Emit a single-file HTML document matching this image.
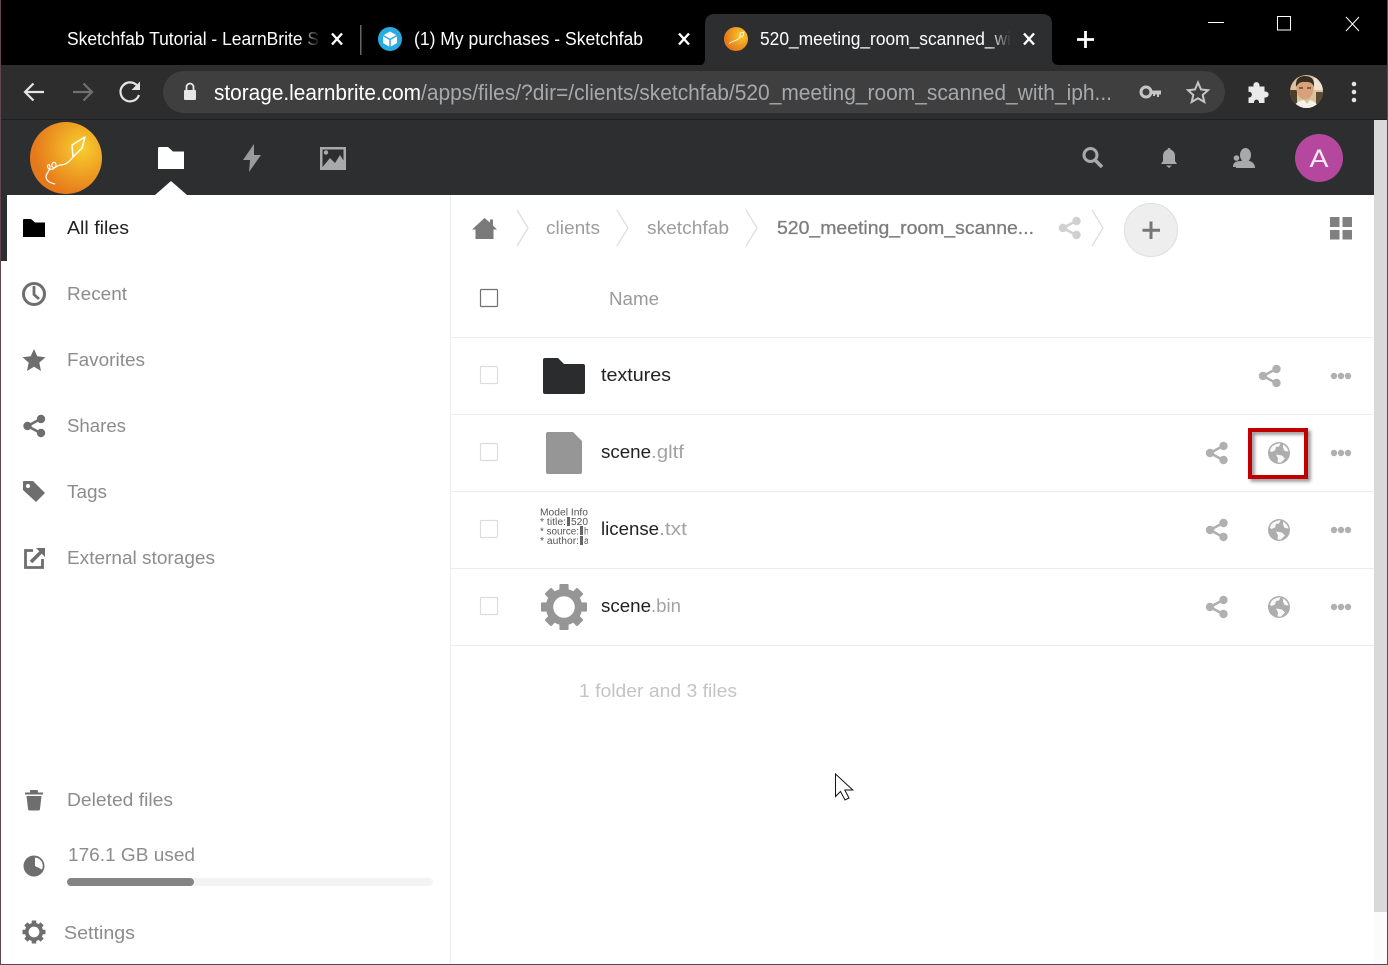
<!DOCTYPE html>
<html><head><meta charset="utf-8"><title>Files</title>
<style>
html,body{margin:0;padding:0;background:#fff;overflow:hidden;width:1388px;height:965px}
svg{display:block;position:absolute;left:0;top:0}
text{font-family:"Liberation Sans",sans-serif;white-space:pre}
.side{font-size:18px;fill:#8c8c8c}
.name{font-size:18px;fill:#222}
.ext{font-size:18px;fill:#a3a3a3}
.tab{font-size:18px;fill:#fff}
.url{font-size:22px}
</style></head><body>
<svg width="1388" height="965" viewBox="0 0 1388 965" xmlns="http://www.w3.org/2000/svg">
<defs>
<g id="share"><path d="M-7 0L6-7M-7 0L6 7" stroke-width="2.600" fill="none" stroke="currentColor"/><circle cx="-7" cy="0" r="4.200" fill="currentColor"/><circle cx="6.500" cy="-7" r="4.200" fill="currentColor"/><circle cx="6.500" cy="7" r="4.200" fill="currentColor"/></g>
<g id="dots" fill="#b0b0b0"><circle cx="-7" r="3.200"/><circle cx="0" r="3.200"/><circle cx="7" r="3.200"/></g>
<g id="globe"><circle r="11" fill="#adadad"/><path d="M-7-6.500C-4-9 0-10 1.500-9.500L0-6.500-3-6-4-2.500-7.500-1-9-2C-9-3.500-8-5-7-6.500Z" fill="#fff" opacity=".92"/><path d="M4-8.500C7-7 9-4 9.500-1.500L5.500-2 4-5.500Z" fill="#fff" opacity=".92"/><path d="M-3 1.500L3 2.500 6 5.500 2 9.500C0 9.800-1 9.500-1.500 9L-1 5.500Z" fill="#fff" opacity=".92"/></g>
<g id="gear"><circle r="14.500" fill="none" stroke="currentColor" stroke-width="7.500"/>
<g fill="currentColor"><rect x="-4.600" y="-23" width="9.200" height="8" rx="1"/><rect x="-4.600" y="-23" width="9.200" height="8" rx="1" transform="rotate(45)"/><rect x="-4.600" y="-23" width="9.200" height="8" rx="1" transform="rotate(90)"/><rect x="-4.600" y="-23" width="9.200" height="8" rx="1" transform="rotate(135)"/><rect x="-4.600" y="-23" width="9.200" height="8" rx="1" transform="rotate(180)"/><rect x="-4.600" y="-23" width="9.200" height="8" rx="1" transform="rotate(225)"/><rect x="-4.600" y="-23" width="9.200" height="8" rx="1" transform="rotate(270)"/><rect x="-4.600" y="-23" width="9.200" height="8" rx="1" transform="rotate(315)"/></g></g>
<radialGradient id="orange" cx=".72" cy=".36" r=".66"><stop offset="0" stop-color="#f8cf2e"/><stop offset="1" stop-color="#e67a1b"/></radialGradient>
<linearGradient id="fadeB" x1="0" x2="1" y1="0" y2="0"><stop offset="0" stop-color="#000" stop-opacity="0"/><stop offset="1" stop-color="#000"/></linearGradient>
<linearGradient id="fadeD" x1="0" x2="1" y1="0" y2="0"><stop offset="0" stop-color="#2d2e30" stop-opacity="0"/><stop offset="1" stop-color="#2d2e30"/></linearGradient>
<clipPath id="thumb"><rect x="538" y="504" width="50" height="44"/></clipPath>
<clipPath id="avatar"><circle cx="1306.500" cy="91.500" r="16.500"/></clipPath>
<filter id="sh" x="-20%" y="-20%" width="150%" height="150%"><feDropShadow dx="2.500" dy="2.500" stdDeviation="1.800" flood-color="#000" flood-opacity=".45"/></filter>
</defs>

<!-- chrome tab strip -->
<rect width="1388" height="65" fill="#000"/>
<path d="M700 65Q705 65 705 58V24Q705 14 715 14H1042Q1052 14 1052 24V58Q1052 65 1059 65Z" fill="#2d2e30"/>
<text class="tab" x="67" y="45" textLength="252" lengthAdjust="spacingAndGlyphs">Sketchfab Tutorial - LearnBrite S</text>
<rect x="300" y="26" width="20" height="26" fill="url(#fadeB)"/>
<rect x="319" y="26" width="6" height="26" fill="#000"/>
<path d="M332 33.500L342 44.500M342 33.500L332 44.500" stroke="#fff" stroke-width="2.400"/>
<rect x="360" y="25" width="1.500" height="30" fill="#666"/>
<circle cx="390" cy="39" r="12" fill="#29abe2"/>
<path d="M390 31.500L397 35.500V43L390 47 383 43V35.500Z" fill="#fff"/><path d="M390 39.500V47M383 35.500L390 39.500 397 35.500" stroke="#29abe2" stroke-width="1.500" fill="none"/>
<text class="tab" x="414" y="45" textLength="229" lengthAdjust="spacingAndGlyphs">(1) My purchases - Sketchfab</text>
<path d="M679 33.500L689 44.500M689 33.500L679 44.500" stroke="#fff" stroke-width="2.400"/>
<circle cx="736" cy="39" r="12" fill="url(#orange)"/>
<path d="M740 33l4-1-1 4-3 1zM740 37c-2 3-4 3-6 4-2 1-4 1-5 3" stroke="#fff" stroke-width=".8" fill="none"/>
<text class="tab" x="760" y="45" textLength="251" lengthAdjust="spacingAndGlyphs">520_meeting_room_scanned_wi</text>
<rect x="990" y="26" width="21" height="26" fill="url(#fadeD)"/>
<path d="M1024 33.500L1034 44.500M1034 33.500L1024 44.500" stroke="#fff" stroke-width="2.400"/>
<path d="M1085.500 31V48M1077 39.500H1094" stroke="#fff" stroke-width="2.800"/>
<path d="M1208 22.500H1224" stroke="#fff" stroke-width="1"/>
<rect x="1277.500" y="16.500" width="13" height="13.500" fill="none" stroke="#fff" stroke-width="1"/>
<path d="M1346 17L1359 31M1359 17L1346 31" stroke="#fff" stroke-width="1"/>

<!-- chrome toolbar -->
<rect y="65" width="1388" height="54" fill="#2d2d2e"/>
<rect y="119" width="1388" height="1" fill="#1f1f20"/>
<path d="M44 92H26M33.500 83.500L25 92l8.500 8.500" stroke="#e4e4e4" stroke-width="2.200" fill="none"/>
<path d="M92 92H73M83.500 83.500L92 92l-8.500 8.500" stroke="#6f6f6f" stroke-width="2.200" fill="none"/>
<path d="M137.500 86A9.500 9.500 0 1 0 139 95" stroke="#e4e4e4" stroke-width="2.200" fill="none"/><path d="M140 81.500V90H131.500Z" fill="#e4e4e4"/>
<rect x="163" y="71" width="1062" height="42" rx="21" fill="#3f3f40"/>
<rect x="184" y="90" width="12" height="10" rx="1" fill="#e6e6e6"/><path d="M186.500 90V87a3.500 3.500 0 0 1 7 0V90" stroke="#e6e6e6" stroke-width="1.800" fill="none"/>
<text class="url" x="214" y="100" fill="#fff" textLength="207" lengthAdjust="spacingAndGlyphs">storage.learnbrite.com</text>
<text class="url" x="421" y="100" fill="#a6a8ab" textLength="691" lengthAdjust="spacingAndGlyphs">/apps/files/?dir=/clients/sketchfab/520_meeting_room_scanned_with_iph...</text>
<circle cx="1146" cy="92" r="5" fill="none" stroke="#c6c6c6" stroke-width="3"/><path d="M1150 90.500H1161V94.500H1159V97H1157V94.500H1155V96H1153V94H1150Z" fill="#c6c6c6"/>
<path d="M1198 82.500L1201 89.500 1208 90.200 1202.700 95 1204.300 102 1198 98.300 1191.700 102 1193.300 95 1188 90.200 1195 89.500Z" fill="none" stroke="#c6c6c6" stroke-width="2"/>
<path d="M1248.500 86.500H1253.500C1252.500 81 1260 80.500 1259.500 86.500H1264.500V91.500C1270 91 1270 98 1264.500 97.500V103H1259C1259.500 98.500 1253.500 98.500 1254 103H1248.500V97.500C1253 98 1253 91 1248.500 92Z" fill="#eaeaea"/>
<g clip-path="url(#avatar)"><rect x="1290" y="75" width="33" height="33" fill="#d9c4a0"/><rect x="1290" y="90" width="7" height="18" fill="#4e3f2c"/><rect x="1316" y="92" width="7" height="16" fill="#5d4a33"/><rect x="1314" y="78" width="9" height="12" fill="#efe4cf"/><ellipse cx="1305" cy="89" rx="8.500" ry="10.500" fill="#d8a179"/><path d="M1296 87Q1295 76 1305 76 1315 76 1314 87 1312 81 1305 82 1299 81 1296 87Z" fill="#3a2d22"/><path d="M1299 88h4M1307 88h4" stroke="#4a3424" stroke-width="1.200"/><path d="M1293 108Q1296 101 1304 100L1307 104 1310 100Q1316 102 1320 108Z" fill="#f6f2ea"/></g>
<circle cx="1354" cy="84" r="2.300" fill="#e4e4e4"/><circle cx="1354" cy="92" r="2.300" fill="#e4e4e4"/><circle cx="1354" cy="100" r="2.300" fill="#e4e4e4"/>

<!-- app header -->
<rect y="120" width="1388" height="75" fill="#2d2e30"/>
<circle cx="66" cy="158" r="36" fill="url(#orange)"/>
<path d="M85 137L72 145 73 157 82 148Z" fill="#f7c42c" fill-opacity=".5" stroke="#fff" stroke-width="1.500" stroke-linejoin="round"/>
<path d="M73 157C69 162 66 165 60 165C56 166 54 170 52 166C51 162 56 161 56 165C55 170 50 170 48 168C46 165 50 163 50 167C50 171 46 173 46 177C47 182 51 183 55 184" fill="none" stroke="#fff" stroke-width="1.200"/>
<path d="M158 148.500Q158 147 159.500 147H168L173 151.500H184V169H158Z" fill="#fff"/>
<path d="M155 195L171 181 187 195Z" fill="#fff"/>
<path d="M254 144L243 160H250L249 172 261 155H254Z" fill="#9a9a9a"/>
<rect x="320" y="147" width="26" height="23" fill="#a9a9a9"/><rect x="322.500" y="149.500" width="21" height="18" fill="#2d2e30"/>
<path d="M321 169L330 158 335 163 340 155 345 163V169Z" fill="#a9a9a9"/><circle cx="326" cy="152.500" r="2.200" fill="#a9a9a9"/>
<circle cx="1090.500" cy="155" r="6.500" fill="none" stroke="#a9a9a9" stroke-width="3"/><path d="M1095 160L1102 167" stroke="#a9a9a9" stroke-width="3.500"/>
<path d="M1169 149.500C1173 149.500 1175 152.500 1175 156V161L1177 164H1161L1163 161V156C1163 152.500 1165 149.500 1169 149.500Z" fill="#a9a9a9"/><rect x="1167.500" y="148" width="3" height="3" rx="1.500" fill="#a9a9a9"/><path d="M1166 165.500H1172L1169 168Z" fill="#a9a9a9"/>
<ellipse cx="1245.500" cy="155" rx="5.500" ry="7" fill="#a9a9a9"/><path d="M1236 168Q1236 161 1245 160 1255 161 1255 168Z" fill="#a9a9a9"/><circle cx="1236.500" cy="158" r="2.800" fill="#a9a9a9"/><path d="M1233 167Q1233 161 1240 161V167Z" fill="#a9a9a9"/>
<circle cx="1319" cy="158" r="24" fill="#b5489e"/>
<text x="1309.500" y="167" font-size="25" fill="#f7e8f3" textLength="19" lengthAdjust="spacingAndGlyphs">A</text>

<!-- sidebar -->
<rect x="1" y="195" width="6" height="66" fill="#2d2e30"/>
<rect x="450" y="195" width="1" height="770" fill="#ededed"/>
<path d="M23 220Q23 219 24 219H31L35 222.500H45V237H23Z" fill="#000"/>
<text x="67" y="234" font-size="18" fill="#222" textLength="62" lengthAdjust="spacingAndGlyphs">All files</text>

<circle cx="34" cy="294" r="10.500" fill="none" stroke="#6e6e6e" stroke-width="3"/><path d="M34 286V294.500L39 299" fill="none" stroke="#6e6e6e" stroke-width="2.800"/>
<text class="side" x="67" y="300" textLength="60" lengthAdjust="spacingAndGlyphs">Recent</text>
<path d="M34 349L37.300 356.300 45.500 357.200 39.300 362.600 41 371 34 366.700 27 371 28.700 362.600 22.500 357.200 30.700 356.300Z" fill="#6e6e6e"/>
<text class="side" x="67" y="366" textLength="78" lengthAdjust="spacingAndGlyphs">Favorites</text>
<use href="#share" x="34.500" y="426" color="#6e6e6e"/>
<text class="side" x="67" y="432" textLength="59" lengthAdjust="spacingAndGlyphs">Shares</text>
<path d="M23 482Q23 481 24 481H33L45 493 36 502 23 490Z" fill="#6e6e6e"/><circle cx="28" cy="486" r="2" fill="#fff"/>
<text class="side" x="67" y="498" textLength="40" lengthAdjust="spacingAndGlyphs">Tags</text>
<path d="M33 550.500H25.500V567.500H42.500V559" fill="none" stroke="#6e6e6e" stroke-width="2.800"/><path d="M31 562L41 552" stroke="#6e6e6e" stroke-width="3.500"/><path d="M36 548H45V557Z" fill="#6e6e6e"/>
<text class="side" x="67" y="564" textLength="148" lengthAdjust="spacingAndGlyphs">External storages</text>

<path d="M25 792.500H43V794.500H25Z" fill="#6e6e6e"/><rect x="30" y="790" width="8" height="3" rx="1" fill="#6e6e6e"/><path d="M26.500 796H41.500L40 809Q40 810.500 38 810.500H30Q28 810.500 28 809Z" fill="#6e6e6e"/>
<text class="side" x="67" y="806" textLength="106" lengthAdjust="spacingAndGlyphs">Deleted files</text>
<circle cx="34" cy="866" r="10.500" fill="#6e6e6e"/><path d="M35 857.500A8.500 8.500 0 0 1 42 869.500L35 866Z" fill="#fff"/>
<text class="side" x="68" y="861" textLength="127" lengthAdjust="spacingAndGlyphs">176.1 GB used</text>
<rect x="67" y="878" width="366" height="8" rx="4" fill="#f3f3f3"/><rect x="67" y="878" width="127" height="8" rx="4" fill="#848484"/>
<use href="#gear" transform="translate(34 932) scale(.5)" color="#6e6e6e"/>
<text class="side" x="64" y="939" textLength="71" lengthAdjust="spacingAndGlyphs">Settings</text>

<!-- breadcrumb -->
<path d="M484.500 218L490 222.500V219.500H493V225.500L497 229.500H493.500V239H475.500V229.500H472Z" fill="#7a7a7a"/>
<g fill="none" stroke="#dcdcdc" stroke-width="1.200"><path d="M517 210L528 228 517 246"/><path d="M617 210L628 228 617 246"/><path d="M746 210L757 228 746 246"/><path d="M1092 210L1103 228 1092 246"/></g>
<text x="546" y="234" font-size="18" fill="#9d9d9d" textLength="54" lengthAdjust="spacingAndGlyphs">clients</text>
<text x="647" y="234" font-size="18" fill="#9d9d9d" textLength="82" lengthAdjust="spacingAndGlyphs">sketchfab</text>
<text x="777" y="234" font-size="18" fill="#7d7d7d" stroke="#7d7d7d" stroke-width=".3" textLength="257" lengthAdjust="spacingAndGlyphs">520_meeting_room_scanne...</text>
<use href="#share" x="1070" y="228" color="#d0d0d0"/>
<circle cx="1151" cy="230" r="26.500" fill="#eeeeee" stroke="#dedede"/>
<path d="M1151 221.500V239M1142.500 230.300H1160" stroke="#777" stroke-width="3"/>
<g fill="#808080"><rect x="1330" y="217" width="9.500" height="10"/><rect x="1342.500" y="217" width="9.500" height="10"/><rect x="1330" y="230" width="9.500" height="9.500"/><rect x="1342.500" y="230" width="9.500" height="9.500"/></g>

<!-- table head -->
<rect x="480.500" y="289.500" width="17" height="17" rx="1" fill="#fff" stroke="#707070" stroke-width="1.200"/>
<text x="609" y="305" font-size="18" fill="#9a9a9a" textLength="50" lengthAdjust="spacingAndGlyphs">Name</text>
<g fill="#ededed"><rect x="451" y="337" width="923" height="1"/><rect x="451" y="414" width="923" height="1"/><rect x="451" y="491" width="923" height="1"/><rect x="451" y="568" width="923" height="1"/><rect x="451" y="645" width="923" height="1"/></g>

<!-- rows -->
<g fill="#fff" stroke="#dddddd" stroke-width="1.200"><rect x="480.500" y="366.500" width="17" height="17" rx="1"/><rect x="480.500" y="443.500" width="17" height="17" rx="1"/><rect x="480.500" y="520.500" width="17" height="17" rx="1"/><rect x="480.500" y="597.500" width="17" height="17" rx="1"/></g>

<path d="M543 360Q543 358 545 358H558L564 364H583Q585 364 585 366V392Q585 394 583 394H545Q543 394 543 392Z" fill="#2b2c2e"/>
<text class="name" x="601" y="381" textLength="70" lengthAdjust="spacingAndGlyphs">textures</text>
<use href="#share" x="1270" y="376" color="#b0b0b0"/>
<use href="#dots" x="1341" y="376"/>

<path d="M546 434Q546 432 548 432H573L582 441V472Q582 474 580 474H548Q546 474 546 472Z" fill="#969696"/>
<text class="name" x="601" y="458" textLength="50" lengthAdjust="spacingAndGlyphs">scene</text><text class="ext" x="651" y="458" textLength="33" lengthAdjust="spacingAndGlyphs">.gltf</text>
<use href="#share" x="1217" y="453" color="#b0b0b0"/>
<use href="#globe" x="1279" y="453"/>
<use href="#dots" x="1341" y="453"/>
<rect x="1250" y="430" width="56" height="47" fill="none" stroke="#c00000" stroke-width="4" filter="url(#sh)"/>

<g clip-path="url(#thumb)" fill="#555" font-size="10">
<text x="540" y="515.500" textLength="48" lengthAdjust="spacingAndGlyphs">Model Info</text>
<text x="540" y="525" textLength="26" lengthAdjust="spacingAndGlyphs">* title:</text><text x="571" y="525" textLength="17" lengthAdjust="spacingAndGlyphs">520</text>
<text x="540" y="534.500" textLength="39" lengthAdjust="spacingAndGlyphs">* source:</text><text x="584" y="534.500" textLength="5" lengthAdjust="spacingAndGlyphs">h</text>
<text x="540" y="544" textLength="39" lengthAdjust="spacingAndGlyphs">* author:</text><text x="584" y="544" textLength="5" lengthAdjust="spacingAndGlyphs">a</text>
<rect x="567" y="517" width="3" height="9" fill="#666"/><rect x="580" y="526" width="3" height="9" fill="#666"/><rect x="580" y="536" width="3" height="9" fill="#666"/>
</g>
<text class="name" x="601" y="535" textLength="58" lengthAdjust="spacingAndGlyphs">license</text><text class="ext" x="659" y="535" textLength="28" lengthAdjust="spacingAndGlyphs">.txt</text>
<use href="#share" x="1217" y="530" color="#b0b0b0"/>
<use href="#globe" x="1279" y="530"/>
<use href="#dots" x="1341" y="530"/>

<use href="#gear" transform="translate(564 607)" color="#969696"/>
<text class="name" x="601" y="612" textLength="50" lengthAdjust="spacingAndGlyphs">scene</text><text class="ext" x="651" y="612" textLength="30" lengthAdjust="spacingAndGlyphs">.bin</text>
<use href="#share" x="1217" y="607" color="#b0b0b0"/>
<use href="#globe" x="1279" y="607"/>
<use href="#dots" x="1341" y="607"/>

<text x="579" y="697" font-size="18" fill="#c4c4c4" textLength="158" lengthAdjust="spacingAndGlyphs">1 folder and 3 files</text>

<!-- cursor -->
<path d="M835.500 774V796.500L840.500 791.500 845 800 849 798 844.800 790H852.800Z" fill="#fff" stroke="#111" stroke-width="1"/>

<!-- scrollbar -->
<rect x="1374" y="120" width="13" height="792" fill="#d9d9d9"/>
<rect x="1374" y="912" width="13" height="53" fill="#fbfbfb"/>

<!-- window border -->
<rect x="0" y="0" width="1" height="965" fill="#5f4650"/>
<rect x="1387" y="0" width="1" height="965" fill="#5f4650"/>
<rect x="0" y="964" width="1388" height="1" fill="#5f4650"/>
</svg>
</body></html>
